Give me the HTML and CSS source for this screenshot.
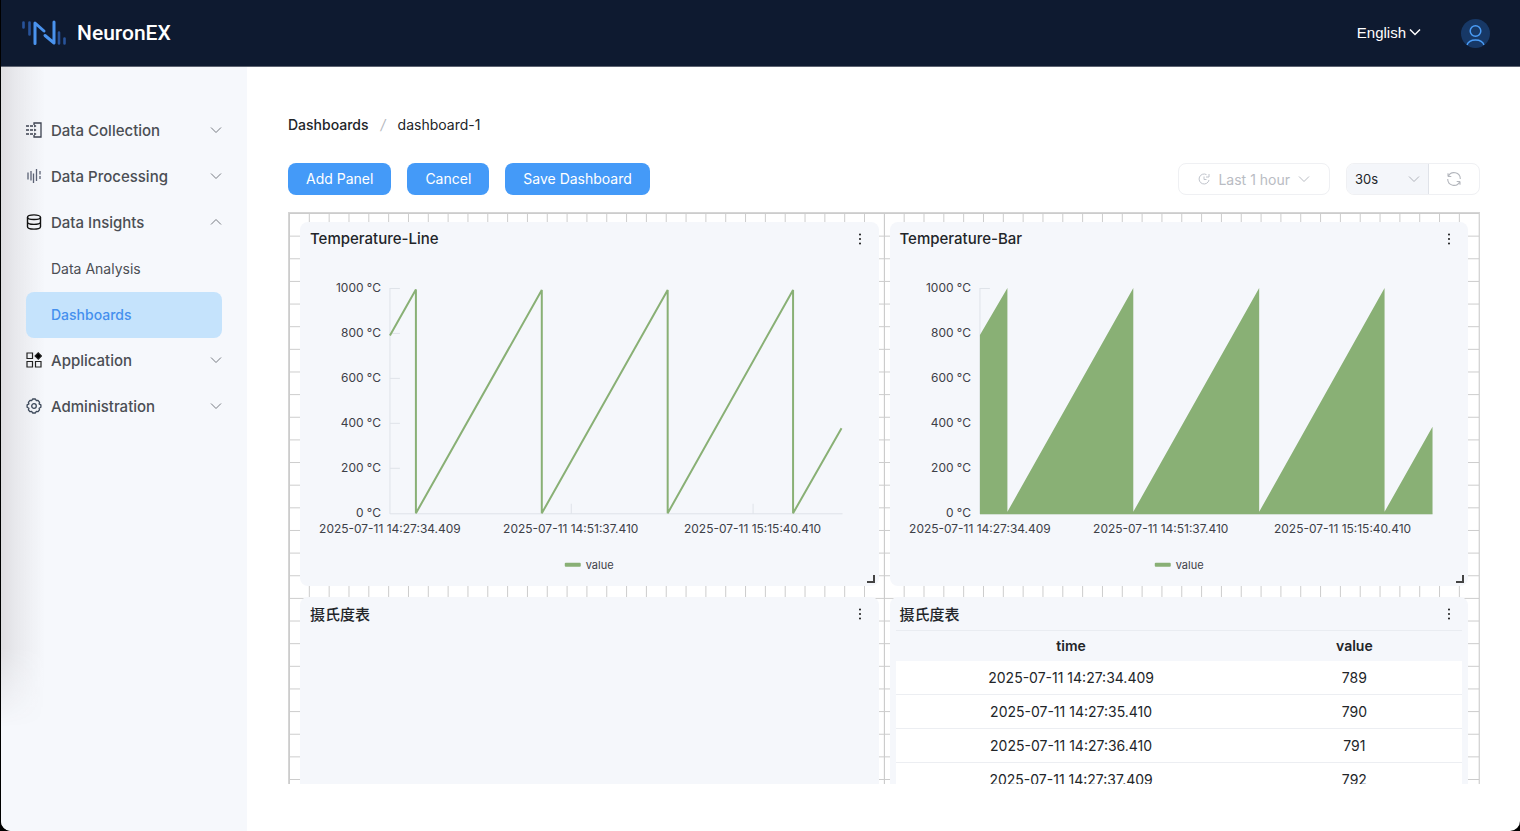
FILE: index.html
```html
<!DOCTYPE html>
<html lang="en">
<head>
 <meta charset="UTF-8">
 <title>NeuronEX</title>
 <link rel="stylesheet" href="styles.css">
</head>
<body>
<svg class="defs" width="0" height="0">
 <symbol id="down" viewBox="0 0 12 12"><path d="M1 3.500 6 8.500 11 3.500"/></symbol>
 <symbol id="up" viewBox="0 0 12 12"><path d="M1 8.500 6 3.500 11 8.500"/></symbol>
 <symbol id="dots" viewBox="0 0 4 12"><circle cx="2" cy="1.500" r=".9"/><circle cx="2" cy="6" r=".9"/><circle cx="2" cy="10.500" r=".9"/></symbol>
</svg>
<div class="app">
 <header class="header">
  <a class="logo" href="#">
   <svg width="46" height="28" viewBox="0 0 46 28" fill="none" stroke-linecap="round">
    <path d="M2.500 3.500v5M8.500 3.500v12M38 13.500v11M43.500 19.500v5" stroke="#28539a" stroke-width="2.600"/>
    <path d="M14 24.500V4l9 8M24 16.500l9 7.500V3" stroke="#4a93ee" stroke-width="3" stroke-linejoin="round"/>
   </svg>
   <span>NeuronEX</span>
  </a>
  <div class="header-right">
   <button class="lang" type="button">English<svg class="arrow" width="12" height="12"><use href="#down"/></svg></button>
   <button class="avatar" type="button" aria-label="User">
    <svg width="29" height="29" viewBox="0 0 29 29" fill="none" stroke="#4a9cf6" stroke-width="1.500"><circle cx="14.500" cy="12" r="5.300"/><path d="M6 26a8.700 6.500 0 0 1 17 0"/></svg>
   </button>
  </div>
 </header>
 <div class="body">
  <nav class="sidebar">
   <a class="item" href="#">
    <svg width="16" height="16" viewBox="0 0 16 16" fill="none" stroke="#3c4250" stroke-width="1.300"><path d="M8 3V1h7v14H8v-2"/><path d="M0 4h9M0 8h9M0 12h9" stroke-dasharray="3 1"/><path d="m8.500 2.500 2 1.500-2 1.500zM8.500 6.500l2 1.500-2 1.500zM8.500 10.500l2 1.500-2 1.500z" fill="#3c4250" stroke="none"/></svg>
    <span>Data Collection</span><svg class="arrow" width="12" height="12"><use href="#down"/></svg>
   </a>
   <a class="item" href="#">
    <svg width="16" height="16" viewBox="0 0 16 16" fill="none" stroke="#5b6275" stroke-width="1.300"><path d="M2 4.500v7M5 3v9.500M7.500 5.500V15M10.500 1v12M14 3v3.500M14 8v3"/></svg>
    <span>Data Processing</span><svg class="arrow" width="12" height="12"><use href="#down"/></svg>
   </a>
   <a class="item" href="#">
    <svg width="16" height="16" viewBox="0 0 16 16" fill="none" stroke="#111" stroke-width="1.400"><ellipse cx="8" cy="3.200" rx="6.500" ry="2.300"/><path d="M1.500 3.200v9.500c0 3.200 13 3.200 13 0V3.200M1.500 8c0 3.200 13 3.200 13 0"/></svg>
    <span>Data Insights</span><svg class="arrow" width="12" height="12"><use href="#up"/></svg>
   </a>
   <a class="item sub" href="#">Data Analysis</a>
   <a class="item sub active" href="#">Dashboards</a>
   <a class="item" href="#">
    <svg width="16" height="16" viewBox="0 0 16 16" fill="none" stroke="#222" stroke-width="1.200"><path d="M1 1h5.500v5.500H1zM1 9.500h5.500V15H1zM9.500 9.500H15V15H9.500z"/><path d="m12.300.8 3.200 3.200-3.200 3.200L9.100 4z" fill="#000"/></svg>
    <span>Application</span><svg class="arrow" width="12" height="12"><use href="#down"/></svg>
   </a>
   <a class="item" href="#">
    <svg width="16" height="16" viewBox="0 0 16 16" fill="none" stroke="#3c4859" stroke-width="1.300" stroke-linejoin="round"><path d="m6.600 1 2.800 0 .8 1.500 1.800-.1 1.600 1.900-.5 1.600 1.800 1v2.300l-1.800 1 .4 1.700-1.600 1.800-1.700-.2L9.400 15H6.600l-.8-1.500-1.800.2-1.600-1.800.5-1.700-1.800-1V6.900l1.800-1-.5-1.600L4 2.400l1.800.1z"/><circle cx="8" cy="8" r="2.300"/></svg>
    <span>Administration</span><svg class="arrow" width="12" height="12"><use href="#down"/></svg>
   </a>
  </nav>
  <main class="main">
   <div class="breadcrumb"><a href="#">Dashboards</a><i>/</i><span>dashboard-1</span></div>
   <div class="toolbar">
    <button class="btn" type="button">Add Panel</button>
    <button class="btn" type="button">Cancel</button>
    <button class="btn" type="button">Save Dashboard</button>
    <button class="range" type="button" disabled>
     <svg width="12" height="12" viewBox="0 0 12 12" fill="none" stroke="#c0c4cc"><path d="M8.500 1.600A5 5 0 1 0 11 7M6 3.500v3h2.500M8 4h3V1"/></svg>
     Last 1 hour
     <svg class="arrow" width="12" height="12"><use href="#down"/></svg>
    </button>
    <div class="refresh">
     <label class="interval"><select aria-label="Refresh interval"><option>30s</option></select><svg class="arrow" width="12" height="12"><use href="#down"/></svg></label>
     <button type="button" aria-label="Refresh"><svg width="16" height="16" viewBox="0 0 16 16" fill="none" stroke="#b4b7bd" stroke-width="1.100"><path d="M2 5.500V2.200M2 5.500h3.300M2.300 5.300a6.300 6.300 0 0 1 12 2.700M14 10.500v3.300M14 10.500h-3.300M13.700 10.700A6.300 6.300 0 0 1 1.700 8"/></svg></button>
    </div>
   </div>
   <div class="board-wrap">
    <div class="board">
     <section class="panel">
      <div class="panel-head"><h3>Temperature-Line</h3><button type="button" aria-label="More"><svg width="4" height="12"><use href="#dots"/></svg></button></div>
      <svg class="chart" viewBox="0 0 579 329">
       <path class="axis" d="M90 33V259H543M90 33.500h10M90 78.500h10M90 123.500h10M90 168.500h10M90 213.500h10M271.500 259v-10M453.500 259v-10"/>
       <path class="line" d="M90 80.500 116 34.500V258.500L242 35V258.500L368 35V258.500L493.500 35V258.500L542 173.500"/>
       <g class="y-label"><text x="81" y="37">1000 °C</text><text x="81" y="82">800 °C</text><text x="81" y="127">600 °C</text><text x="81" y="172">400 °C</text><text x="81" y="217">200 °C</text><text x="81" y="262">0 °C</text></g>
       <g class="x-label"><text x="90" y="278">2025-07-11 14:27:34.409</text><text x="271" y="278">2025-07-11 14:51:37.410</text><text x="453" y="278">2025-07-11 15:15:40.410</text></g>
       <rect class="key" x="265" y="308" width="16" height="4" rx="1"/><text class="legend" x="286" y="314">value</text>
      </svg>
      <span class="resize"></span>
     </section>
     <section class="panel">
      <div class="panel-head"><h3>Temperature-Bar</h3><button type="button" aria-label="More"><svg width="4" height="12"><use href="#dots"/></svg></button></div>
      <svg class="chart" viewBox="0 0 579 329">
       <path class="axis" d="M90 33V259H543M90 33.500h10"/>
       <path class="area" d="M90 259.500V80L117.500 33V257L243.500 33V257L369.500 33V257L495 33V257L543 172V259.500z"/>
       <g class="y-label"><text x="81" y="37">1000 °C</text><text x="81" y="82">800 °C</text><text x="81" y="127">600 °C</text><text x="81" y="172">400 °C</text><text x="81" y="217">200 °C</text><text x="81" y="262">0 °C</text></g>
       <g class="x-label"><text x="90" y="278">2025-07-11 14:27:34.409</text><text x="271" y="278">2025-07-11 14:51:37.410</text><text x="453" y="278">2025-07-11 15:15:40.410</text></g>
       <rect class="key" x="265" y="308" width="16" height="4" rx="1"/><text class="legend" x="286" y="314">value</text>
      </svg>
      <span class="resize"></span>
     </section>
     <section class="panel">
      <div class="panel-head"><h3>摄氏度表</h3><button type="button" aria-label="More"><svg width="4" height="12"><use href="#dots"/></svg></button></div>
     </section>
     <section class="panel">
      <div class="panel-head"><h3>摄氏度表</h3><button type="button" aria-label="More"><svg width="4" height="12"><use href="#dots"/></svg></button></div>
      <div class="table-wrap">
       <table>
        <thead><tr><th class="col-time">time</th><th>value</th></tr></thead>
        <tbody>
         <tr><td>2025-07-11 14:27:34.409</td><td>789</td></tr>
         <tr><td>2025-07-11 14:27:35.410</td><td>790</td></tr>
         <tr><td>2025-07-11 14:27:36.410</td><td>791</td></tr>
         <tr><td>2025-07-11 14:27:37.409</td><td>792</td></tr>
        </tbody>
       </table>
      </div>
     </section>
    </div>
   </div>
  </main>
 </div>
</div>
</body>
</html>
```
FILE: styles.css
```css
* {
 box-sizing: border-box;
 }
body {
 margin: 0;
 background: #000;
 color: #222529;
 font-family: Inter, "Noto Sans CJK SC", sans-serif;
 font-size: 14px;
 }
a {
 color: inherit;
 text-decoration: none;
 }
button, select {
 font: inherit;
 color: inherit;
 border: none;
 background: none;
 padding: 0;
 }
.defs {
 position: absolute;
 }
.arrow {
 fill: none;
 stroke: currentColor;
 flex: none;
 }
.app {
 display: flex;
 flex-direction: column;
 height: 100vh;
 margin-left: 1px;
 background: #fff;
 border-radius: 0 0 10px 10px;
 overflow: hidden;
 }
/* top bar */
.header {
 display: flex;
 flex: none;
 justify-content: space-between;
 align-items: center;
 height: 67px;
 padding: 0 30px 0 20px;
 background: #0e1a30;
 border-bottom: 1px solid #5d6371;
 color: #fff;
 }
.logo {
 display: flex;
 align-items: center;
 gap: 10px;
 font-family: Roboto, sans-serif;
 font-size: 21px;
 font-weight: 500;
 }
.header-right {
 display: flex;
 align-items: center;
 gap: 40px;
 }
.lang {
 display: flex;
 align-items: center;
 gap: 3px;
 padding-bottom: 2px;
 font-family: "Liberation Sans", sans-serif;
 font-size: 15px;
 }
.lang .arrow {
 stroke-width: 1.5;
 }
.avatar {
 display: flex;
 border-radius: 50%;
 background: #173866;
 overflow: hidden;
 }
.body {
 display: flex;
 flex: 1;
 min-height: 0;
 }
/* left menu */
.sidebar {
 position: relative;
 flex: none;
 width: 246px;
 padding: 41px 25px;
 background: #f6f8fc;
 }
.sidebar::before {
 content: "";
 position: absolute;
 left: 0;
 top: 0;
 width: 44px;
 height: 660px;
 background: linear-gradient(to right, rgba(70, 50, 50, 0.13), rgba(70, 50, 50, 0.08) 30%, transparent);
 -webkit-mask-image: linear-gradient(#000 88%, transparent);
 mask-image: linear-gradient(#000 88%, transparent);
 }
.item {
 position: relative;
 display: flex;
 align-items: center;
 gap: 9px;
 height: 46px;
 padding-bottom: 2px;
 font-size: 15px;
 font-weight: 500;
 color: #4b4e54;
 }
.item .arrow {
 margin-left: auto;
 color: #777b82;
 }
.sub {
 padding-left: 25px;
 font-size: 14px;
 font-weight: 400;
 }
.active {
 border-radius: 8px;
 background: #c5e3fc;
 color: #4590ee;
 font-weight: 500;
 }
/* content */
.main {
 display: flex;
 flex: 1;
 flex-direction: column;
 min-width: 0;
 padding: 48px 40px 47px 41px;
 }
.breadcrumb {
 display: flex;
 gap: 12px;
 line-height: 20px;
 }
.breadcrumb a {
 font-weight: 500;
 }
.breadcrumb i {
 color: #b5b8be;
 }
.toolbar {
 display: flex;
 gap: 16px;
 margin: 28px 0 17px;
 }
.btn {
 height: 32px;
 padding: 0 18px 2px;
 border-radius: 8px;
 background: #449af8;
 color: #fff;
 }
.range {
 display: flex;
 align-items: center;
 gap: 8px;
 height: 32px;
 margin-left: auto;
 padding: 0 19px;
 border: 1px solid #eff0f3;
 border-radius: 8px;
 color: #b9bcc3;
 }
.refresh {
 display: flex;
 height: 32px;
 border: 1px solid #eff0f3;
 border-radius: 8px;
 overflow: hidden;
 }
.interval {
 display: flex;
 align-items: center;
 width: 82px;
 padding: 0 8px;
 border-right: 1px solid #e0e3e9;
 background: #f4f6fa;
 }
.interval select {
 flex: 1;
 appearance: none;
 font-size: 13px;
 }
.interval .arrow {
 color: #b0b3ba;
 }
.refresh button {
 display: flex;
 align-items: center;
 justify-content: center;
 width: 50px;
 }
.board-wrap {
 flex: 1;
 min-height: 0;
 border-top: 1px solid #d5d5d5;
 border-right: 1px solid #d5d5d5;
 overflow: hidden;
 }
/* 60 columns by 34 rows of guide lines */
.board {
 display: grid;
 grid-template-columns: 1fr 1fr;
 grid-auto-rows: 364px;
 gap: 11px;
 padding: 9px 11px 22px;
 border-left: 1px solid #d5d5d5;
 background-image: linear-gradient(#ccc, #ccc), linear-gradient(to right, #ccc 1px, transparent 1px), linear-gradient(#ccc 1px, transparent 1px);
 background-position: 50% 0, 0 0, 0 0;
 background-repeat: no-repeat, repeat, repeat;
 background-size: 1px 100%, calc(100% / 60) 100%, 100% calc(100% / 34);
 }
.panel {
 position: relative;
 min-width: 0;
 border-radius: 8px;
 background: #f5f7fb;
 overflow: hidden;
 }
.panel-head {
 display: flex;
 justify-content: space-between;
 align-items: center;
 height: 33px;
 padding: 0 17px 0 10px;
 }
.panel-head h3 {
 margin: 0;
 font-size: 15px;
 font-weight: 500;
 }
.panel-head button {
 display: flex;
 }
.resize {
 position: absolute;
 right: 4px;
 bottom: 3px;
 width: 8px;
 height: 8px;
 border-right: 2px solid #444;
 border-bottom: 2px solid #444;
 }
.chart {
 display: block;
 width: 100%;
 fill: #3d4047;
 font-size: 12px;
 }
.axis {
 fill: none;
 stroke: #dfe3e9;
 }
.line {
 fill: none;
 stroke: #89b075;
 stroke-width: 2;
 stroke-linejoin: bevel;
 }
.area, .key {
 fill: #89b075;
 }
.legend {
 font-size: 11px;
 }
.y-label {
 text-anchor: end;
 }
.x-label {
 text-anchor: middle;
 }
.table-wrap {
 padding: 0 6px;
 }
table {
 width: 100%;
 border-collapse: collapse;
 table-layout: fixed;
 text-align: center;
 }
th {
 height: 30px;
 padding: 0;
 border-top: 1px solid #e9ecf1;
 font-weight: 600;
 }
.col-time {
 width: 62%;
 }
td {
 height: 34px;
 padding: 0;
 border-bottom: 1px solid #eceef2;
 background: #fff;
 }
```
